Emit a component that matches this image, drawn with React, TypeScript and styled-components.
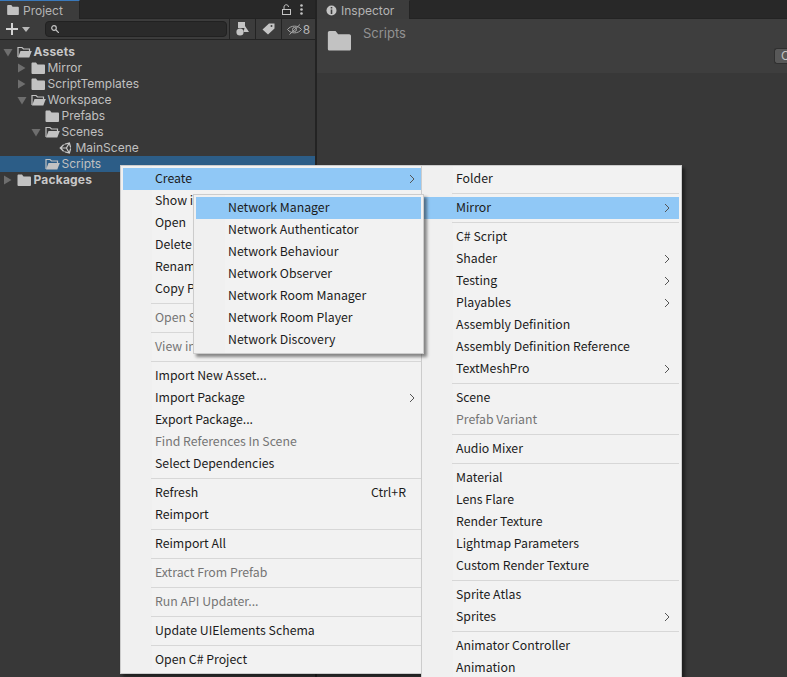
import React from "react";
import styled, { createGlobalStyle } from "styled-components";
import { FaUnity } from "react-icons/fa";

type Entry = { label?: string; off?: boolean; arrow?: boolean; hot?: boolean; keys?: string };

const SEP: Entry = {};

const mainMenu: Entry[] = [
  { label: "Create", arrow: true, hot: true },
  { label: "Show in Explorer" },
  { label: "Open" },
  { label: "Delete" },
  { label: "Rename" },
  { label: "Copy Path" },
  SEP,
  { label: "Open Scene Additive", off: true },
  SEP,
  { label: "View in Package Manager", off: true },
  SEP,
  { label: "Import New Asset..." },
  { label: "Import Package", arrow: true },
  { label: "Export Package..." },
  { label: "Find References In Scene", off: true },
  { label: "Select Dependencies" },
  SEP,
  { label: "Refresh", keys: "Ctrl+R" },
  { label: "Reimport" },
  SEP,
  { label: "Reimport All" },
  SEP,
  { label: "Extract From Prefab", off: true },
  SEP,
  { label: "Run API Updater...", off: true },
  SEP,
  { label: "Update UIElements Schema" },
  SEP,
  { label: "Open C# Project" },
];

const createMenu: Entry[] = [
  { label: "Folder" },
  SEP,
  { label: "Mirror", arrow: true, hot: true },
  SEP,
  { label: "C# Script" },
  { label: "Shader", arrow: true },
  { label: "Testing", arrow: true },
  { label: "Playables", arrow: true },
  { label: "Assembly Definition" },
  { label: "Assembly Definition Reference" },
  { label: "TextMeshPro", arrow: true },
  SEP,
  { label: "Scene" },
  { label: "Prefab Variant", off: true },
  SEP,
  { label: "Audio Mixer" },
  SEP,
  { label: "Material" },
  { label: "Lens Flare" },
  { label: "Render Texture" },
  { label: "Lightmap Parameters" },
  { label: "Custom Render Texture" },
  SEP,
  { label: "Sprite Atlas" },
  { label: "Sprites", arrow: true },
  SEP,
  { label: "Animator Controller" },
  { label: "Animation" },
];

const mirrorMenu: Entry[] = [
  { label: "Network Manager", hot: true },
  { label: "Network Authenticator" },
  { label: "Network Behaviour" },
  { label: "Network Observer" },
  { label: "Network Room Manager" },
  { label: "Network Room Player" },
  { label: "Network Discovery" },
];

const tree = [
  { name: "Assets", depth: 0, twist: "open", icon: "open", bold: true },
  { name: "Mirror", depth: 1, twist: "closed", icon: "folder" },
  { name: "ScriptTemplates", depth: 1, twist: "closed", icon: "folder" },
  { name: "Workspace", depth: 1, twist: "open", icon: "open" },
  { name: "Prefabs", depth: 2, icon: "folder" },
  { name: "Scenes", depth: 2, twist: "open", icon: "open" },
  { name: "MainScene", depth: 3, icon: "unity" },
  { name: "Scripts", depth: 2, icon: "open", selected: true },
  { name: "Packages", depth: 0, twist: "closed", icon: "folder", bold: true },
];

const GlobalStyle = createGlobalStyle`
  html, body {
    margin: 0;
    padding: 0;
    background: #383838;
  }
`;

const Page = styled.div`
  position: relative;
  width: 787px;
  height: 677px;
  overflow: hidden;
  display: flex;
  background: #383838;
  font-family: Inter, "Liberation Sans", sans-serif;
  font-size: 12px;
  color: #c4c4c4;
`;

const ProjectPanel = styled.div`
  width: 315px;
  flex-shrink: 0;
  display: flex;
  flex-direction: column;
  border-right: 2px solid #232323;
`;

const InspectorPanel = styled.div`
  flex: 1;
  min-width: 0;
  display: flex;
  flex-direction: column;
`;

const TabBar = styled.div`
  height: 18px;
  display: flex;
  align-items: stretch;
  background: #282828;
  border-bottom: 1px solid #232323;
`;

const Tab = styled.div<{ $width: number; $inset: number; $active?: boolean }>`
  width: ${(p) => p.$width}px;
  height: 19px;
  box-sizing: border-box;
  display: flex;
  align-items: center;
  gap: 4px;
  padding-left: ${(p) => p.$inset}px;
  background: #3c3c3c;
  border-top: 1px solid ${(p) => (p.$active ? "#3a79bb" : "#3c3c3c")};
  border-right: 1px solid #232323;
  color: #b4b4b4;
`;

const TabTools = styled.div`
  margin-left: auto;
  display: flex;
  align-items: center;
  gap: 9px;
  padding-right: 12px;
`;

const Toolbar = styled.div`
  height: 20px;
  display: flex;
  align-items: center;
  background: #3c3c3c;
  border-bottom: 1px solid #232323;
`;

const CreateButton = styled.div`
  width: 45px;
  flex-shrink: 0;
  display: flex;
  align-items: center;
  gap: 4px;
  padding-left: 6px;
  box-sizing: border-box;
`;

const SearchField = styled.div`
  width: 182px;
  height: 16px;
  display: flex;
  align-items: center;
  padding-left: 5px;
  box-sizing: border-box;
  border-radius: 4px;
  border: 1px solid #212121;
  background: #2a2a2a;
`;

const ToolButton = styled.div<{ $width: number; $first?: boolean }>`
  width: ${(p) => p.$width}px;
  height: 20px;
  box-sizing: border-box;
  display: flex;
  align-items: center;
  justify-content: center;
  gap: 1px;
  border-left: 1px solid #232323;
  margin-left: ${(p) => (p.$first ? "2px" : "0")};
  color: #b4b4b4;
  font-size: 12px;
`;

const TreeList = styled.div`
  padding-top: 4px;
`;

const TreeRow = styled.div<{ $depth: number; $selected?: boolean }>`
  height: 16px;
  display: flex;
  align-items: center;
  padding-left: ${(p) => 3 + p.$depth * 14}px;
  background: ${(p) => (p.$selected ? "#2c5d87" : "transparent")};
`;

const Twist = styled.div`
  width: 14px;
  flex-shrink: 0;
  display: flex;
  align-items: center;
`;

const TreeIcon = styled.div`
  width: 16.5px;
  flex-shrink: 0;
  display: flex;
  align-items: center;
`;

const TreeLabel = styled.span<{ $bold?: boolean }>`
  margin-top: -2px;
  font-weight: ${(p) => (p.$bold ? 700 : 400)};
  letter-spacing: ${(p) => (p.$bold ? "0.2px" : "0")};
  color: ${(p) => (p.$bold ? "#c8c8c8" : "#c0c0c0")};
  white-space: nowrap;
`;

const InspectorHeader = styled.div`
  height: 54px;
  display: flex;
  align-items: flex-start;
  background: #3e3e3e;
`;

const BigFolder = styled.div`
  margin: 11px 0 0 10px;
  width: 25px;
  flex-shrink: 0;
`;

const InspectorTitle = styled.div`
  margin: 6px 0 0 11px;
  font-size: 13px;
  color: #929292;
`;

const ClippedButton = styled.div`
  margin: 29px 0 0 auto;
  width: 13px;
  height: 16px;
  box-sizing: border-box;
  padding-left: 6px;
  overflow: hidden;
  border-radius: 3px 0 0 3px;
  background: #585858;
  border: 1px solid #303030;
  border-right: 0;
  color: #c4c4c4;
  font-size: 12px;
  line-height: 14px;
`;

const Menu = styled.div<{ $left: number; $top: number; $width: number; $layer: number }>`
  position: absolute;
  left: ${(p) => p.$left}px;
  top: ${(p) => p.$top}px;
  width: ${(p) => p.$width}px;
  z-index: ${(p) => p.$layer};
  box-sizing: border-box;
  padding: 2px;
  background: linear-gradient(to right, #f0f0f0 31px, #f2f2f2 31px);
  border: 1px solid #cccccc;
  box-shadow: 3px 3px 3px rgba(0, 0, 0, 0.45);
  font-family: "Noto Sans CJK TC", "Noto Sans", sans-serif;
  font-size: 12.3px;
  color: #1c1c1c;
`;

const Row = styled.div<{ $hot?: boolean; $off?: boolean; $tail: number }>`
  height: 22px;
  box-sizing: border-box;
  display: flex;
  align-items: center;
  padding: 0 ${(p) => p.$tail}px 2px 32px;
  background: ${(p) => (p.$hot ? "#90c8f6" : "transparent")};
  color: ${(p) => (p.$off ? "#757575" : "#1c1c1c")};
  white-space: nowrap;
`;

const Keys = styled.span`
  margin-left: auto;
  margin-right: 9px;
`;

const Chevron = styled.svg`
  margin: 2px 0 0 auto;
  flex-shrink: 0;
`;

const Separator = styled.div`
  height: 1px;
  margin: 3px 0 3px 28px;
  background: #d7d7d7;
`;

const FolderIcon = ({ size = 14 }: { size?: number }) => (
  <svg width={size} height={size * 0.86} viewBox="0 0 14 12" fill="#c2c2c2">
    <path d="M0.5 1.5C0.5 1 1 0.5 1.5 0.5H5L6.5 2.5H13C13.5 2.5 14 3 14 3.5V11C14 11.5 13.5 12 13 12H1.5C1 12 0.5 11.5 0.5 11Z" />
  </svg>
);

const OpenFolderIcon = () => (
  <svg width="15" height="12" viewBox="0 0 15 12">
    <path d="M1 11V1.5H5L6.5 3H12.5V5" fill="none" stroke="#c2c2c2" strokeWidth="1.2" />
    <path d="M1 11.5L3.5 5H14.8L12.3 11.5Z" fill="#c2c2c2" />
  </svg>
);

const TwistIcon = ({ open }: { open: boolean }) =>
  open ? (
    <svg width="10" height="9" viewBox="0 0 10 9">
      <path d="M0.5 1H9.5L5 8.5Z" fill="#6e6e6e" />
    </svg>
  ) : (
    <svg width="9" height="10" viewBox="0 0 9 10">
      <path d="M1 0.5V9.5L8.5 5Z" fill="#6e6e6e" />
    </svg>
  );

const MenuRows = ({ items, tail }: { items: Entry[]; tail: number }) => (
  <>
    {items.map((item, i) =>
      item.label ? (
        <Row key={i} $hot={item.hot} $off={item.off} $tail={tail}>
          {item.label}
          {item.keys && <Keys>{item.keys}</Keys>}
          {item.arrow && (
            <Chevron width="6" height="10" viewBox="0 0 6 10">
              <path d="M1 1L5 5L1 9" fill="none" stroke="#555" strokeWidth="1" />
            </Chevron>
          )}
        </Row>
      ) : (
        <Separator key={i} />
      )
    )}
  </>
);

const TreeGlyph = ({ icon }: { icon: string }) => {
  if (icon === "open") return <OpenFolderIcon />;
  if (icon === "unity") return <FaUnity size={14} color="#c8c8c8" />;
  return <FolderIcon />;
};

const App = () => (
  <Page>
    <GlobalStyle />
    <ProjectPanel>
      <TabBar>
        <Tab $width={80} $inset={7} $active>
          <svg width="12" height="10" viewBox="0 0 14 12" fill="#c2c2c2">
            <path d="M0 1C0 0.5 0.5 0 1 0H5L6.5 2H13C13.5 2 14 2.5 14 3V11C14 11.5 13.5 12 13 12H1C0.5 12 0 11.5 0 11Z" />
          </svg>
          Project
        </Tab>
        <TabTools>
          <svg width="9" height="11" viewBox="0 0 9 11" fill="none" stroke="#c4c4c4">
            <rect x="0.5" y="5.5" width="8" height="5" />
            <path d="M2 5.5V3C2 0 6.5 0 6.5 3" />
          </svg>
          <svg width="3" height="11" viewBox="0 0 3 11" fill="#c4c4c4">
            <circle cx="1.5" cy="1.5" r="1.3" />
            <circle cx="1.5" cy="5.5" r="1.3" />
            <circle cx="1.5" cy="9.5" r="1.3" />
          </svg>
        </TabTools>
      </TabBar>
      <Toolbar>
        <CreateButton>
          <svg width="12" height="12" viewBox="0 0 12 12">
            <path d="M6 0V12M0 6H12" stroke="#d2d2d2" strokeWidth="2" />
          </svg>
          <svg width="8" height="5" viewBox="0 0 8 5">
            <path d="M0 0H8L4 5Z" fill="#b8b8b8" />
          </svg>
        </CreateButton>
        <SearchField>
          <svg width="8" height="8" viewBox="0 0 8 8" fill="none" stroke="#c4c4c4" strokeWidth="1.2">
            <circle cx="3" cy="3" r="2.3" />
            <path d="M5 5L8 8" />
          </svg>
        </SearchField>
        <ToolButton $width={26} $first>
          <svg width="13" height="14" viewBox="0 0 13 14" fill="#c4c4c4">
            <rect x="2" y="0" width="7" height="6" />
            <path d="M9 4L13 10H7.5Z" />
            <circle cx="4" cy="10" r="3.6" />
          </svg>
        </ToolButton>
        <ToolButton $width={26}>
          <svg width="13" height="12" viewBox="0 0 13 12" fill="#c4c4c4">
            <path d="M0.5 6.5L7 0.5H12.5V5.5L6 11.5ZM9.5 2A1 1 0 1 0 9.5 4A1 1 0 1 0 9.5 2Z" fillRule="evenodd" />
          </svg>
        </ToolButton>
        <ToolButton $width={34}>
          <svg width="15" height="11" viewBox="0 0 15 11" fill="none" stroke="#a8a8a8">
            <path d="M0.5 5.5C4 1 11 1 14.5 5.5C11 10 4 10 0.5 5.5Z" />
            <circle cx="7.5" cy="5.5" r="2" />
            <path d="M2.5 10.5L13 0.5" />
          </svg>
          8
        </ToolButton>
      </Toolbar>
      <TreeList>
        {tree.map((node) => (
          <TreeRow key={node.name} $depth={node.depth} $selected={node.selected}>
            <Twist>{node.twist && <TwistIcon open={node.twist === "open"} />}</Twist>
            <TreeIcon>
              <TreeGlyph icon={node.icon} />
            </TreeIcon>
            <TreeLabel $bold={node.bold}>{node.name}</TreeLabel>
          </TreeRow>
        ))}
      </TreeList>
    </ProjectPanel>
    <InspectorPanel>
      <TabBar>
        <Tab $width={93} $inset={9}>
          <svg width="11" height="11" viewBox="0 0 11 11">
            <circle cx="5.5" cy="5.5" r="5" fill="#c4c4c4" />
            <path d="M5.5 2V3.4M5.5 4.6V9" stroke="#3c3c3c" strokeWidth="1.6" />
          </svg>
          Inspector
        </Tab>
      </TabBar>
      <InspectorHeader>
        <BigFolder>
          <FolderIcon size={24} />
        </BigFolder>
        <InspectorTitle>Scripts</InspectorTitle>
        <ClippedButton>C</ClippedButton>
      </InspectorHeader>
    </InspectorPanel>
    <Menu $left={120} $top={165} $width={304} $layer={1}>
      <MenuRows items={mainMenu} tail={6} />
    </Menu>
    <Menu $left={421} $top={165} $width={261} $layer={2}>
      <MenuRows items={createMenu} tail={9} />
    </Menu>
    <Menu $left={193} $top={194} $width={231} $layer={3}>
      <MenuRows items={mirrorMenu} tail={6} />
    </Menu>
  </Page>
);

export default App;
